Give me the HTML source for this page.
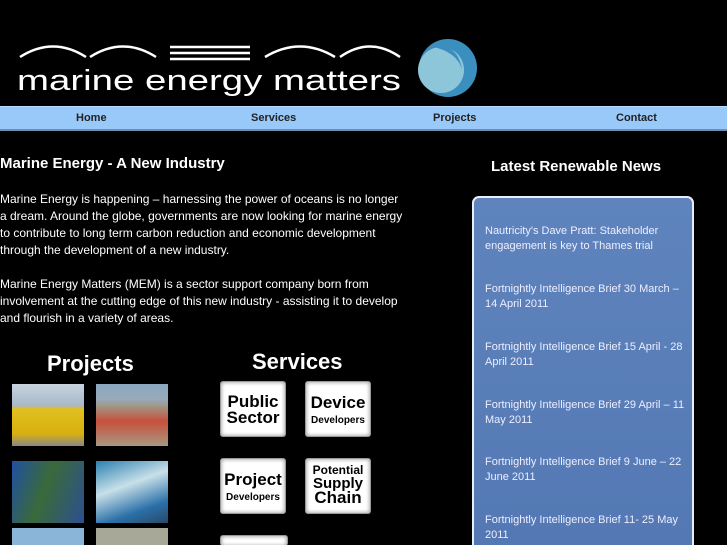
<!DOCTYPE html>
<html style="width:727px;height:545px;overflow:hidden"><head><meta charset="utf-8"><style>
body{margin:0;background:#000;width:727px;height:545px;overflow:hidden;font-family:"Liberation Sans",sans-serif;color:#fff;position:relative}
.a{position:absolute}
.nav{top:106px;left:0;width:727px;height:25px;background:#99c9f9;border-top:1px solid #b8dcff;border-bottom:2px solid #6b8fb5;box-sizing:border-box}
.nav span{position:absolute;top:5px;font-size:11px;font-weight:bold;color:#222}
p{margin:0}
.txt{font-size:12px;line-height:17px;color:#fff}
.img{position:absolute;width:72px;height:62px}
.btn{position:absolute;width:66px;height:56px;background:#fff;border-radius:3px;border:1px solid #999;color:#000;font-weight:bold;text-align:center;box-shadow:inset 0 0 4px #888}
.news{left:472px;top:196px;width:222px;height:349px;background:linear-gradient(#5f84bd,#5378b3);border:2px solid #e8eef8;border-bottom:none;border-radius:7px 7px 0 0;box-sizing:border-box}
.news p{position:absolute;left:11px;width:200px;font-size:11px;line-height:15px;color:#eef}
</style></head><body>
<svg class="a" style="left:0;top:30px" width="727" height="75">
<g fill="none" stroke="#fff" stroke-width="2.5">
<path d="M20 27 Q53 6 86 27"/><path d="M90 27 Q123 6 156 27"/>
<path d="M170 17 H250 M170 23 H250 M170 29 H250"/>
<path d="M265 27 Q300 6 335 27"/><path d="M340 27 Q370 6 400 27"/>
</g>
<circle cx="448" cy="38" r="29" fill="#3b8fbf"/>
<circle cx="441" cy="40" r="23" fill="#8ec6d9"/>
<path d="M430 16 Q458 12 462 40 Q458 22 430 16Z" fill="#3b8fbf"/>
<text x="17" y="60" font-family="Liberation Sans" font-size="29" fill="#fff" textLength="384" lengthAdjust="spacingAndGlyphs">marine energy matters</text>
</svg>
<div class="a nav"><span style="left:76px">Home</span><span style="left:251px">Services</span><span style="left:433px">Projects</span><span style="left:616px">Contact</span></div>
<div class="a" style="left:0;top:155px;font-size:15px;font-weight:bold">Marine Energy - A New Industry</div>
<div class="a txt" style="left:0;top:191px;width:404px"><p>Marine Energy is happening – harnessing the power of oceans is no longer a dream. Around the globe, governments are now looking for marine energy to contribute to long term carbon reduction and economic development through the development of a new industry.</p><br><p>Marine Energy Matters (MEM) is a sector support company born from involvement at the cutting edge of this new industry - assisting it to develop and flourish in a variety of areas.</p></div>
<div class="a" style="left:47px;top:351px;font-size:22px;font-weight:bold">Projects</div>
<div class="a" style="left:252px;top:349px;font-size:22px;font-weight:bold">Services</div>
<div class="img" style="left:12px;top:384px;background:linear-gradient(#c8d4e0 0,#a8b8c8 35%,#e0c020 40%,#d8b010 80%,#888 100%)"></div>
<div class="img" style="left:96px;top:384px;background:linear-gradient(#8aa8c0 0,#9ab 25%,#a09888 35%,#c8503c 60%,#a89880 100%)"></div>
<div class="img" style="left:12px;top:461px;background:linear-gradient(110deg,#2050a0 0,#3a6a3a 45%,#2c5090 100%)"></div>
<div class="img" style="left:96px;top:461px;background:linear-gradient(160deg,#2a80b0,#c8e0e8 40%,#2a70a8 75%,#2a4868)"></div>
<div class="img" style="left:12px;top:528px;height:17px;background:#8ab4d8"></div>
<div class="img" style="left:96px;top:528px;height:17px;background:#a8a898"></div>
<div class="btn" style="left:220px;top:381px;font-size:17px;line-height:16px;padding-top:12px;box-sizing:border-box">Public<br>Sector</div>
<div class="btn" style="left:305px;top:381px;font-size:17px;line-height:15px;padding-top:13px;box-sizing:border-box">Device<br><span style="font-size:10px">Developers</span></div>
<div class="btn" style="left:220px;top:458px;font-size:17px;line-height:15px;padding-top:13px;box-sizing:border-box">Project<br><span style="font-size:10px">Developers</span></div>
<div class="btn" style="left:305px;top:458px;font-size:12px;line-height:13px;padding-top:5px;box-sizing:border-box">Potential<br><span style="font-size:15px">Supply</span><br><span style="font-size:17px">Chain</span></div>
<div class="btn" style="left:220px;top:535px;height:10px;border-bottom:none"></div>
<div class="a" style="left:491px;top:158px;font-size:15px;font-weight:bold">Latest Renewable News</div>
<div class="a news">
<p style="top:26px">Nautricity's Dave Pratt: Stakeholder engagement is key to Thames trial</p>
<p style="top:84px">Fortnightly Intelligence Brief 30 March – 14 April 2011</p>
<p style="top:142px">Fortnightly Intelligence Brief 15 April - 28 April 2011</p>
<p style="top:200px">Fortnightly Intelligence Brief 29 April – 11 May 2011</p>
<p style="top:257px">Fortnightly Intelligence Brief 9 June – 22 June 2011</p>
<p style="top:315px">Fortnightly Intelligence Brief 11- 25 May 2011</p>
</div>
</body></html>
